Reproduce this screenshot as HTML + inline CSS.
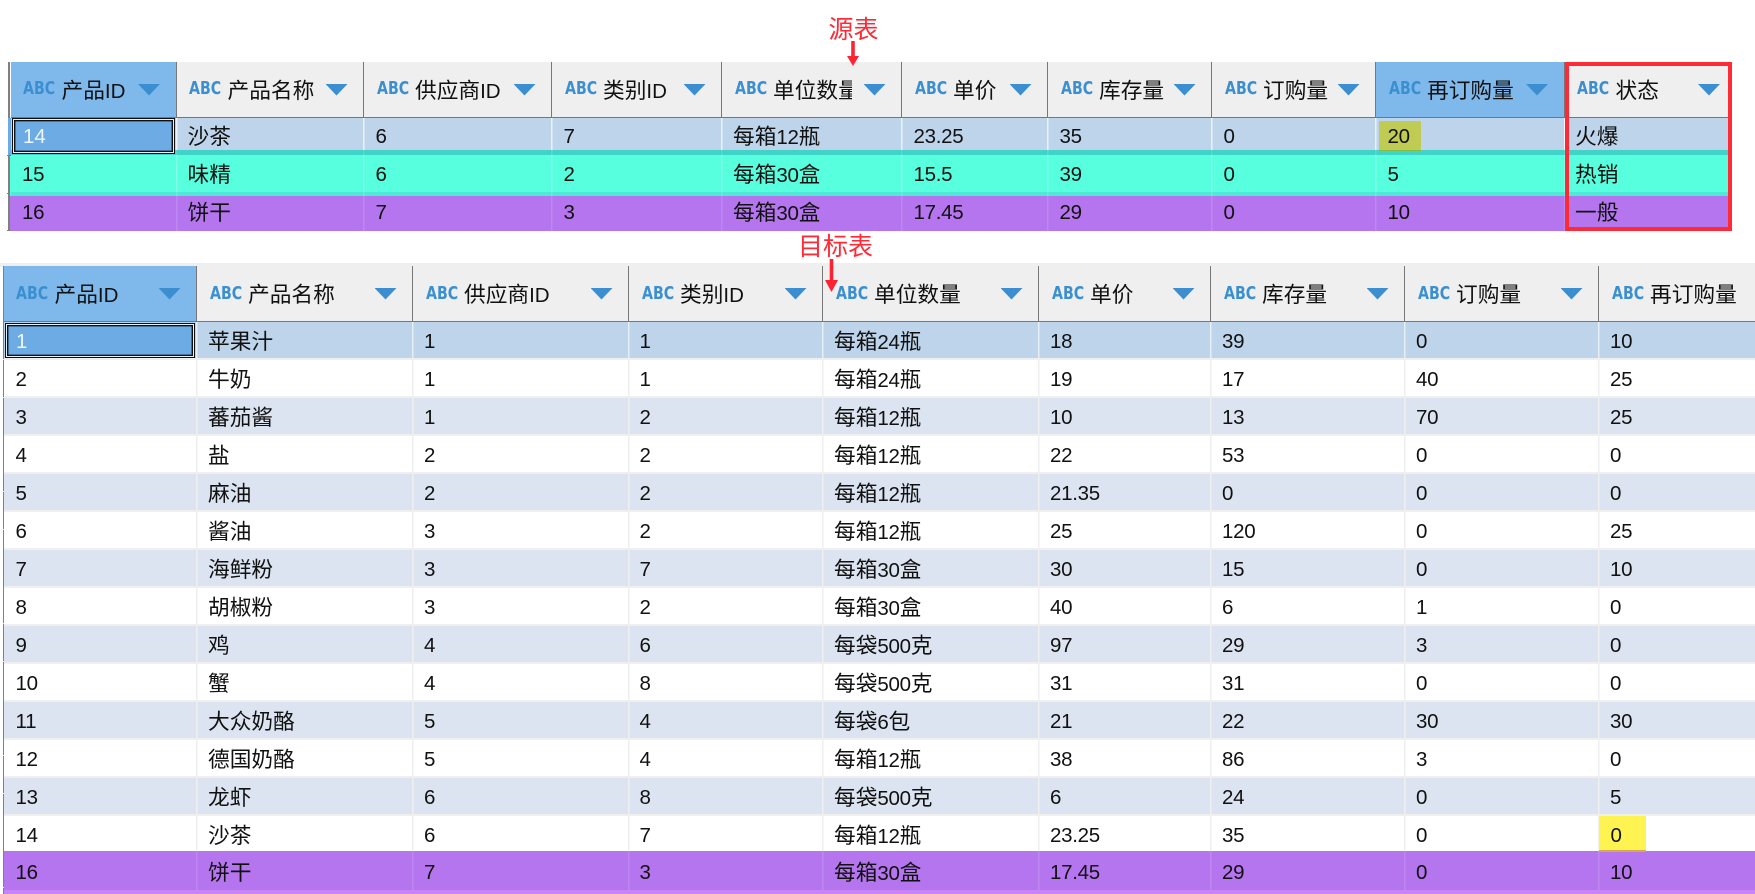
<!DOCTYPE html>
<html lang="zh">
<head>
<meta charset="utf-8">
<title>源表 目标表</title>
<style>
html,body{margin:0;padding:0;background:#fff}
#p{position:relative;width:1755px;height:894px;overflow:hidden;background:#fff;font-family:"Liberation Sans","Noto Sans CJK SC",sans-serif;color:#111}
.r{position:absolute;background-color:var(--b);background-repeat:no-repeat;--s:rgba(255,255,255,.7);--o:0px;overflow:visible}
.r span{position:absolute;top:var(--o);line-height:38px;height:38px;font-size:20.5px;white-space:nowrap;letter-spacing:-.3px}
u{text-decoration:none;font-size:21.7px;letter-spacing:0}
.t1 .r{left:11px;width:1720px;background-image:linear-gradient(var(--s),var(--s)),linear-gradient(var(--s),var(--s)),linear-gradient(var(--s),var(--s)),linear-gradient(var(--s),var(--s)),linear-gradient(var(--s),var(--s)),linear-gradient(var(--s),var(--s)),linear-gradient(var(--s),var(--s)),linear-gradient(var(--s),var(--s)),linear-gradient(var(--s),var(--s));background-size:1.5px 100%;background-position:164.5px 0,351.5px 0,539.5px 0,709.5px 0,889.5px 0,1035.5px 0,1199.5px 0,1363.5px 0,1552.5px 0}
.t1 .r span:nth-child(1){left:11px}
.t1 .r span:nth-child(2){left:176.5px}
.t1 .r span:nth-child(3){left:364.5px}
.t1 .r span:nth-child(4){left:552.5px}
.t1 .r span:nth-child(5){left:722px}
.t1 .r span:nth-child(6){left:902.5px}
.t1 .r span:nth-child(7){left:1048.5px}
.t1 .r span:nth-child(8){left:1212.5px}
.t1 .r span:nth-child(9){left:1376.5px}
.t1 .r span:nth-child(10){left:1564px}
.t2 .r{left:3.5px;width:1752px;height:36px;--o:.6px;background-image:linear-gradient(var(--s),var(--s)),linear-gradient(var(--s),var(--s)),linear-gradient(var(--s),var(--s)),linear-gradient(var(--s),var(--s)),linear-gradient(var(--s),var(--s)),linear-gradient(var(--s),var(--s)),linear-gradient(var(--s),var(--s)),linear-gradient(var(--s),var(--s));background-size:1.5px 100%;background-position:192.5px 0,408.5px 0,624.5px 0,818px 0,1034px 0,1206px 0,1400px 0,1594px 0}
.t2 .r span:nth-child(1){left:12px}
.t2 .r span:nth-child(2){left:204.5px}
.t2 .r span:nth-child(3){left:420.5px}
.t2 .r span:nth-child(4){left:636px}
.t2 .r span:nth-child(5){left:830.5px}
.t2 .r span:nth-child(6){left:1046.5px}
.t2 .r span:nth-child(7){left:1218.5px}
.t2 .r span:nth-child(8){left:1412.5px}
.t2 .r span:nth-child(9){left:1606.5px}
.h{position:absolute;background:#efefef;border-bottom:1.5px solid #777;border-right:1.5px solid #777;box-sizing:border-box;overflow:hidden}
.h.a{background:#7fb9ec}
.h em{position:absolute;left:12.5px;font-family:"DejaVu Sans",sans-serif;font-style:normal;font-weight:bold;font-size:17.5px;color:#3b8fd0;transform:scaleX(.81);transform-origin:left center;line-height:20px}
.h b{position:absolute;left:51px;font-weight:normal;font-size:20.5px;line-height:30px;white-space:nowrap;overflow:hidden;color:#111}
.h i{position:absolute;right:15.5px;width:22px;height:11.5px;background:#3b8fd0;clip-path:polygon(0 0,100% 0,50% 100%)}
.a1 em{top:16.5px}.a1 b{top:13.5px}.a1 i{top:22px}
.a2 em{top:17.5px}.a2 b{top:14px}.a2 i{top:22px}
.cur{position:absolute;box-sizing:border-box;background:#6cabe3;border:1px solid #111;outline:none;box-shadow:inset 0 0 0 1px #e6f0fa,inset 0 0 0 2.4px #111;color:#eef6ff;font-size:20.5px;line-height:36px}
.n{position:absolute;background:#808080}
.an{position:absolute;color:#ff2a36;font-size:25px;line-height:26px;font-family:"Liberation Sans","Noto Sans CJK SC",sans-serif;white-space:nowrap}
</style>
</head>
<body>
<div id="p">

<div class="an" style="left:828.5px;top:17px">源表</div>

<!-- source table -->
<div class="t1">
<div class="n" style="left:8px;top:62px;width:1.5px;height:169px"></div>
<div class="n" style="left:7px;top:154.5px;width:4px;height:1.2px"></div>
<div class="n" style="left:7px;top:192.5px;width:4px;height:1.2px"></div>
<div class="n" style="left:7px;top:230px;width:4px;height:1.2px"></div>
<div style="position:absolute;left:8px;top:117.5px;width:3.5px;height:37px;background:#6cabe3"></div>
<div style="position:absolute;left:9.5px;top:155.7px;width:2px;height:40.3px;background:#57ffde"></div>
<div style="position:absolute;left:9.5px;top:196px;width:2px;height:34px;background:#b475ef"></div>

<div class="h a a1" style="left:10.5px;top:62px;width:166px;height:55.5px"><em>ABC</em><b><u>产品</u>ID</b><i></i></div>
<div class="h a1" style="left:176.5px;top:62px;width:187.5px;height:55.5px"><em>ABC</em><b><u>产品名称</u></b><i></i></div>
<div class="h a1" style="left:364px;top:62px;width:188px;height:55.5px"><em>ABC</em><b><u>供应商</u>ID</b><i></i></div>
<div class="h a1" style="left:552px;top:62px;width:170px;height:55.5px"><em>ABC</em><b><u>类别</u>ID</b><i></i></div>
<div class="h a1" style="left:722px;top:62px;width:180px;height:55.5px"><em>ABC</em><b style="width:79px"><u>单位数量</u></b><i></i></div>
<div class="h a1" style="left:902px;top:62px;width:146px;height:55.5px"><em>ABC</em><b><u>单价</u></b><i></i></div>
<div class="h a1" style="left:1048px;top:62px;width:164px;height:55.5px"><em>ABC</em><b><u>库存量</u></b><i></i></div>
<div class="h a1" style="left:1212px;top:62px;width:164px;height:55.5px"><em>ABC</em><b><u>订购量</u></b><i></i></div>
<div class="h a a1" style="left:1376px;top:62px;width:188.5px;height:55.5px"><em>ABC</em><b><u>再订购量</u></b><i></i></div>
<div class="h a1" style="left:1564.5px;top:62px;width:166.5px;height:55.5px;border-right:0"><em>ABC</em><b><u>状态</u></b><i style="right:11px"></i></div>

<div class="r" style="top:117.5px;height:33px;--b:#bdd4eb;--o:.2px"><span>14</span><span><u>沙茶</u></span><span>6</span><span>7</span><span><u>每箱</u>12<u>瓶</u></span><span>23.25</span><span>35</span><span>0</span><span></span><span><u>火爆</u></span></div>
<div class="r" style="top:150px;height:5px;--b:#40d3c8;--s:rgba(255,255,255,.12)"></div>
<div class="r" style="top:155px;height:37px;--b:#57ffde;--s:rgba(255,255,255,.25);--o:.7px"><span>15</span><span><u>味精</u></span><span>6</span><span>2</span><span><u>每箱</u>30<u>盒</u></span><span>15.5</span><span>39</span><span>0</span><span>5</span><span><u>热销</u></span></div>
<div class="r" style="top:192px;height:4px;--b:#4fe9d8;--s:rgba(255,255,255,.12)"></div>
<div class="r" style="top:196px;height:35px;--b:#b475ef;--s:rgba(255,255,255,.14);--o:-1.8px"><span>16</span><span><u>饼干</u></span><span>7</span><span>3</span><span><u>每箱</u>30<u>盒</u></span><span>17.45</span><span>29</span><span>0</span><span>10</span><span><u>一般</u></span></div>

<div class="cur" style="left:11.5px;top:118px;width:163px;height:35.5px;padding-left:10.5px">14</div>
<div style="position:absolute;left:1379px;top:121px;width:42px;height:30px;background:#bfcb52;border-bottom:1px solid #7fc04a;box-sizing:border-box;font-size:20.5px;line-height:32px;padding-left:8.5px;letter-spacing:-.3px">20</div>

<div style="position:absolute;left:1565px;top:62px;width:166.5px;height:169px;box-sizing:border-box;border:4px solid #ff2a36;border-left-width:4.5px"></div>
</div>

<svg style="position:absolute;left:0;top:0" width="1755" height="894" viewBox="0 0 1755 894"><path d="M851.2 41h3.6v15h4.2l-6 10-6-10h4.2z" fill="#ff2233"/></svg>

<!-- target table -->
<div class="t2">
<div style="position:absolute;left:0;top:263px;width:1755px;height:4px;background:#efefef"></div>
<div style="position:absolute;left:3.5px;top:322px;width:1752px;height:572px;background:#efefef"></div>
<div style="position:absolute;left:2.5px;top:266px;width:1.5px;height:628px;background:repeating-linear-gradient(#808080 0,#808080 93px,#e8e8e8 93px,#e8e8e8 94px,#808080 94px,#808080 131px,#e8e8e8 131px,#e8e8e8 132px)"></div>
<div style="position:absolute;left:3.5px;top:322px;width:3px;height:36px;background:#6cabe3"></div>

<div class="h a a2" style="left:3.5px;top:266px;width:193.5px;height:55.5px"><em>ABC</em><b><u>产品</u>ID</b><i></i></div>
<div class="h a2" style="left:197px;top:266px;width:216px;height:55.5px"><em>ABC</em><b><u>产品名称</u></b><i></i></div>
<div class="h a2" style="left:413px;top:266px;width:216px;height:55.5px"><em>ABC</em><b><u>供应商</u>ID</b><i></i></div>
<div class="h a2" style="left:629px;top:266px;width:194px;height:55.5px"><em>ABC</em><b><u>类别</u>ID</b><i></i></div>
<div class="h a2" style="left:823px;top:266px;width:216px;height:55.5px"><em>ABC</em><b><u>单位数量</u></b><i></i></div>
<div class="h a2" style="left:1039px;top:266px;width:172px;height:55.5px"><em>ABC</em><b><u>单价</u></b><i></i></div>
<div class="h a2" style="left:1211px;top:266px;width:194px;height:55.5px"><em>ABC</em><b><u>库存量</u></b><i></i></div>
<div class="h a2" style="left:1405px;top:266px;width:194px;height:55.5px"><em>ABC</em><b><u>订购量</u></b><i></i></div>
<div class="h a2" style="left:1599px;top:266px;width:156px;height:55.5px;border-right:0"><em>ABC</em><b><u>再订购量</u></b></div>

<div class="r" style="top:322px;--b:#bdd4eb;--s:#e6eef6"><span>1</span><span><u>苹果汁</u></span><span>1</span><span>1</span><span><u>每箱</u>24<u>瓶</u></span><span>18</span><span>39</span><span>0</span><span>10</span></div>
<div class="r" style="top:360px;--b:#fff;--s:#efefef"><span>2</span><span><u>牛奶</u></span><span>1</span><span>1</span><span><u>每箱</u>24<u>瓶</u></span><span>19</span><span>17</span><span>40</span><span>25</span></div>
<div class="r" style="top:398px;--b:#dbe4f0;--s:#efefef"><span>3</span><span><u>蕃茄酱</u></span><span>1</span><span>2</span><span><u>每箱</u>12<u>瓶</u></span><span>10</span><span>13</span><span>70</span><span>25</span></div>
<div class="r" style="top:436px;--b:#fff;--s:#efefef"><span>4</span><span><u>盐</u></span><span>2</span><span>2</span><span><u>每箱</u>12<u>瓶</u></span><span>22</span><span>53</span><span>0</span><span>0</span></div>
<div class="r" style="top:474px;--b:#dbe4f0;--s:#efefef"><span>5</span><span><u>麻油</u></span><span>2</span><span>2</span><span><u>每箱</u>12<u>瓶</u></span><span>21.35</span><span>0</span><span>0</span><span>0</span></div>
<div class="r" style="top:512px;--b:#fff;--s:#efefef"><span>6</span><span><u>酱油</u></span><span>3</span><span>2</span><span><u>每箱</u>12<u>瓶</u></span><span>25</span><span>120</span><span>0</span><span>25</span></div>
<div class="r" style="top:550px;--b:#dbe4f0;--s:#efefef"><span>7</span><span><u>海鲜粉</u></span><span>3</span><span>7</span><span><u>每箱</u>30<u>盒</u></span><span>30</span><span>15</span><span>0</span><span>10</span></div>
<div class="r" style="top:588px;--b:#fff;--s:#efefef"><span>8</span><span><u>胡椒粉</u></span><span>3</span><span>2</span><span><u>每箱</u>30<u>盒</u></span><span>40</span><span>6</span><span>1</span><span>0</span></div>
<div class="r" style="top:626px;--b:#dbe4f0;--s:#efefef"><span>9</span><span><u>鸡</u></span><span>4</span><span>6</span><span><u>每袋</u>500<u>克</u></span><span>97</span><span>29</span><span>3</span><span>0</span></div>
<div class="r" style="top:664px;--b:#fff;--s:#efefef"><span>10</span><span><u>蟹</u></span><span>4</span><span>8</span><span><u>每袋</u>500<u>克</u></span><span>31</span><span>31</span><span>0</span><span>0</span></div>
<div class="r" style="top:702px;--b:#dbe4f0;--s:#efefef"><span>11</span><span><u>大众奶酪</u></span><span>5</span><span>4</span><span><u>每袋</u>6<u>包</u></span><span>21</span><span>22</span><span>30</span><span>30</span></div>
<div class="r" style="top:740px;--b:#fff;--s:#efefef"><span>12</span><span><u>德国奶酪</u></span><span>5</span><span>4</span><span><u>每箱</u>12<u>瓶</u></span><span>38</span><span>86</span><span>3</span><span>0</span></div>
<div class="r" style="top:778px;--b:#dbe4f0;--s:#efefef"><span>13</span><span><u>龙虾</u></span><span>6</span><span>8</span><span><u>每袋</u>500<u>克</u></span><span>6</span><span>24</span><span>0</span><span>5</span></div>
<div class="r" style="top:816px;--b:#fff;--s:#efefef"><span>14</span><span><u>沙茶</u></span><span>6</span><span>7</span><span><u>每箱</u>12<u>瓶</u></span><span>23.25</span><span>35</span><span>0</span><span></span></div>
<div class="r" style="top:851px;height:39px;--b:#b475ef;--s:rgba(255,255,255,.14);--o:3px"><span>16</span><span><u>饼干</u></span><span>7</span><span>3</span><span><u>每箱</u>30<u>盒</u></span><span>17.45</span><span>29</span><span>0</span><span>10</span></div>
<div style="position:absolute;left:3.5px;top:890px;width:1752px;height:4px;background:#c884f5"></div>

<div class="cur" style="left:4.5px;top:322.5px;width:190.5px;height:35px;padding-left:10.5px">1</div>
<div style="position:absolute;left:1598.5px;top:816px;width:47px;height:35.5px;background:#fff352;border-bottom:2px solid #d9a94c;box-sizing:border-box;font-size:20.5px;line-height:39px;padding-left:12px">0</div>
</div>

<div class="an" style="left:798px;top:234px">目标表</div>
<svg style="position:absolute;left:0;top:0" width="1755" height="894" viewBox="0 0 1755 894"><path d="M829.7 259h3.6v21h4.7l-6.5 12-6.5-12h4.7z" fill="#ff2233"/></svg>

</div>
</body>
</html>
